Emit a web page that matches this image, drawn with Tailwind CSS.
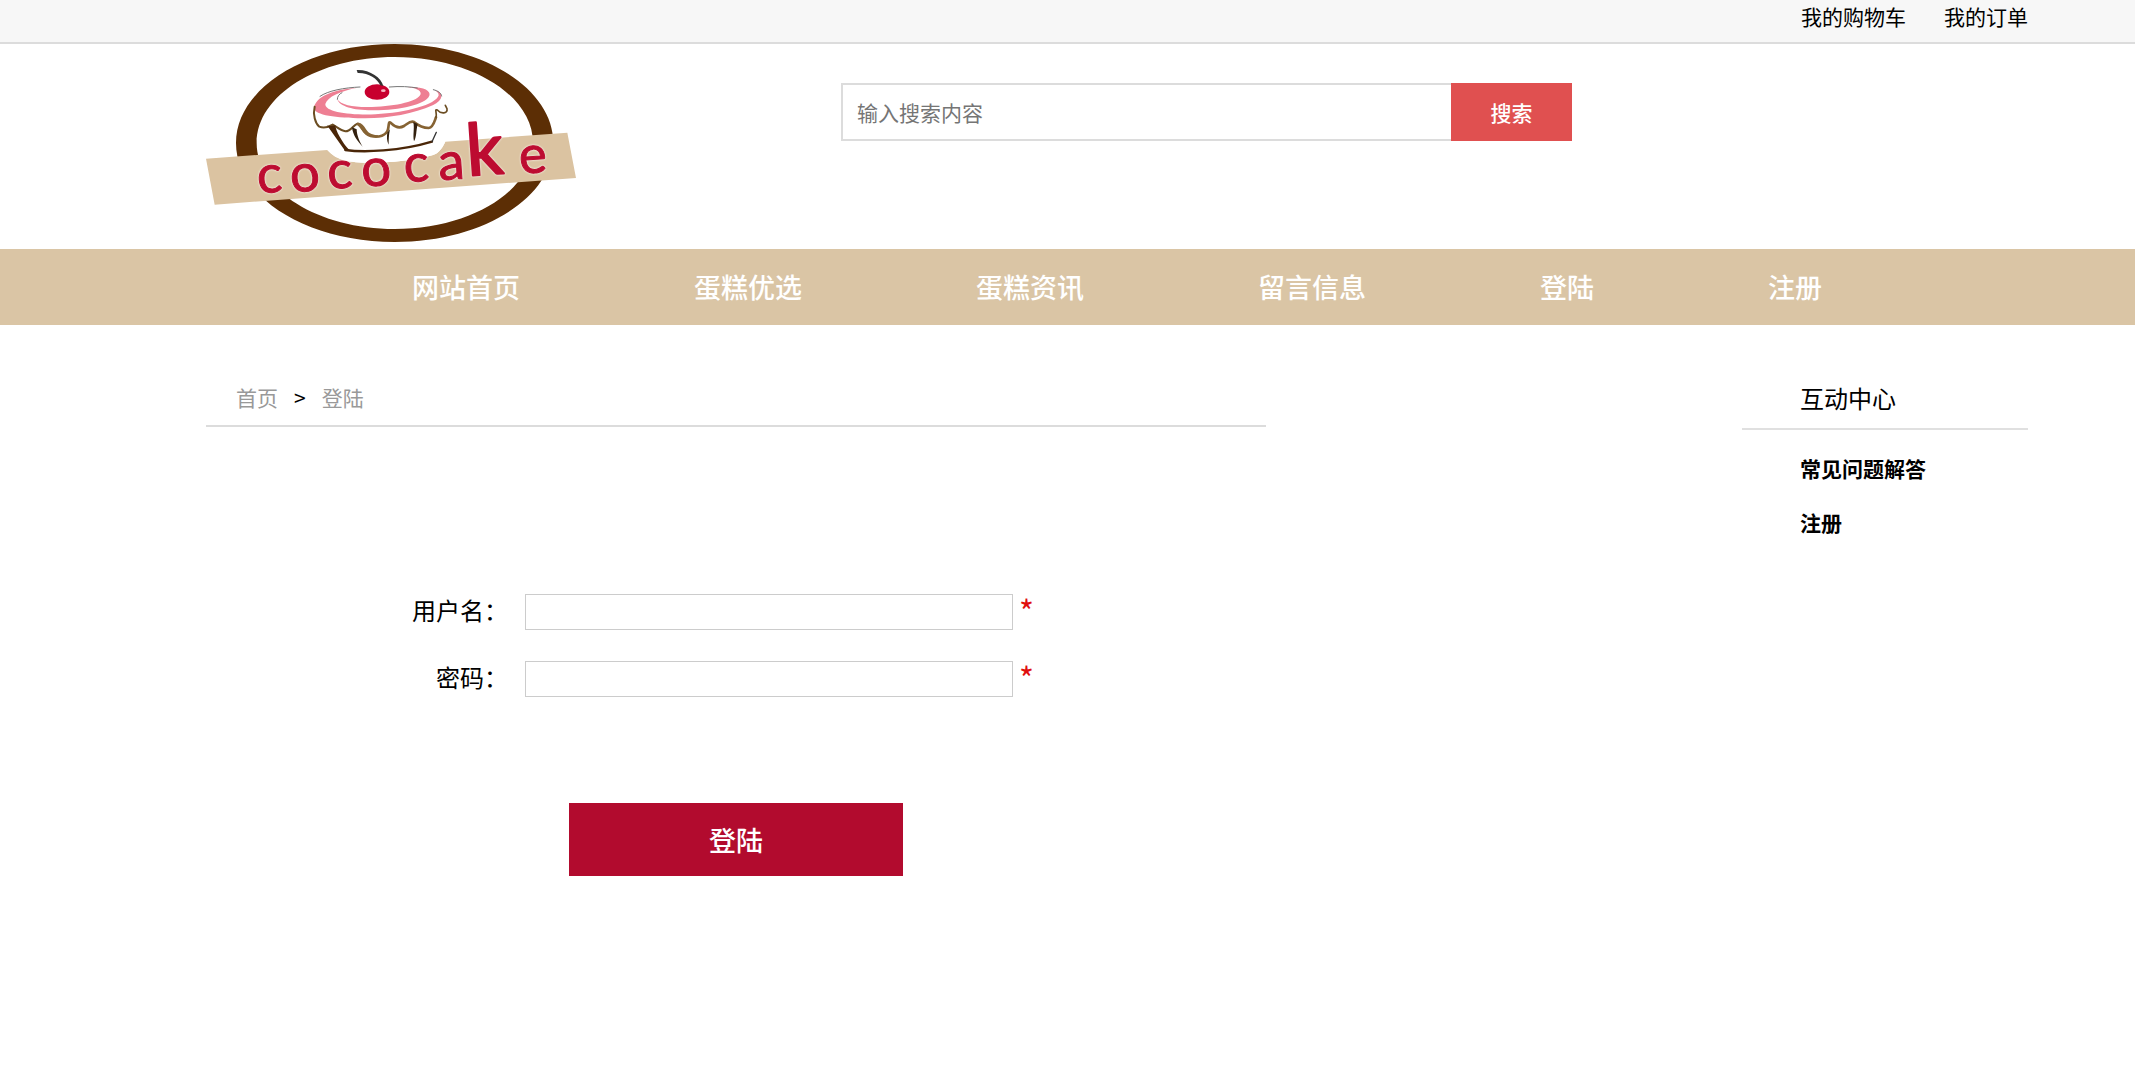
<!DOCTYPE html>
<html lang="zh-CN">
<head>
    <meta charset="UTF-8">
    <meta name="viewport" content="width=device-width, initial-scale=1.0">
    <title>登陆</title>
    <script src="https://cdn.jsdelivr.net/npm/@tailwindcss/browser@4"></script>
</head>
<body class="bg-white text-black text-[21px] leading-8 font-['Noto_Sans_CJK_SC',sans-serif]">
    <div class="h-11 bg-[#f7f7f7] border-b-2 border-[#dcdcdc]">
        <div class="flex justify-end gap-[38px] ml-[206px] mr-[107px]">
            <a href="#">我的购物车</a>
            <a href="#">我的订单</a>
        </div>
    </div>

    <header class="flex items-start h-[205px] ml-[206px] mr-[107px]">
        <a href="#" aria-label="cococake">
            <svg class="w-[370px] h-[198px]" viewBox="48 41 1110 594">
                <ellipse cx="614" cy="338" rx="445" ry="277" fill="#fff" />
                <path fill="#5c2e05" fill-rule="evenodd" d="M614 41C877 41 1090 174 1090 338S877 635 614 635 138 502 138 338 351 41 614 41ZM614 80C385 80 200 195 200 338S385 596 614 596 1029 481 1029 338 843 80 614 80Z" />
                <path fill="#dbc3a1" d="M48 385 412 359C432 380 455 395 520 397 600 400 690 388 735 372 752 362 758 350 766 334L1132 307 1158 443 74 523Z" />
                <path fill="#fff" d="M412 359C432 380 455 395 520 397 600 400 690 388 735 372 752 362 758 350 766 334L740 300 430 310Z" />
                <g transform="translate(330 75)" fill="none" stroke-linecap="round">
                    <path fill="#fff" d="M42 155C70 90 400 60 430 140L400 262C300 295 180 290 135 285Z" />
                    <!-- icing -->
                    <path fill="#ee7f93" d="M42 158C46 126 92 103 172 97 122 107 82 124 76 146 74 170 150 180 226 177 320 172 408 148 416 120 416 112 410 108 403 104 432 110 432 134 398 150 340 176 262 190 188 189 110 188 44 180 42 158Z" />
                    <path fill="#ee7f93" d="M322 95C370 93 394 106 388 121 376 148 300 164 222 165 164 166 118 154 112 132 122 150 166 157 216 155 290 152 356 138 362 116 363 104 346 98 322 95Z" />
                    <path stroke="#777" stroke-width="3" d="M60 123C84 106 132 97 180 95M268 95C300 92 330 94 352 98M112 132C112 122 118 116 126 112M400 103C416 107 424 114 425 122" />
                    <!-- drips -->
                    <path stroke="#6b4d22" stroke-width="6" d="M44 154C38 178 46 204 58 214 72 220 88 214 98 208 112 216 122 226 136 228 154 228 160 208 172 205" />
                    <path stroke="#866333" stroke-width="8" d="M174 206C186 212 190 236 212 242 236 248 260 240 264 222 268 206 264 196 274 204 284 214 298 220 312 212 322 206 332 194 342 200 354 210 366 218 386 218 400 216 404 196 408 186" />
                    <path stroke="#6b4d22" stroke-width="5" d="M408 186C412 174 402 160 412 164 422 176 444 176 441 160L436 150" />
                    <path fill="#866333" d="M168 206C178 196 190 208 198 222 206 236 222 240 236 240 222 250 196 242 188 228 182 216 176 212 168 206Z" />
                    <!-- paper cup -->
                    <path fill="#4a2608" d="M80 208C86 214 96 212 106 210 106 224 126 262 148 284L134 285Z" />
                    <path stroke="#4a2608" stroke-width="7" d="M136 284C190 292 300 288 396 259" />
                    <path stroke="#333" stroke-width="4" d="M396 259 409 231" />
                    <path fill="#33210f" d="M156 216 170 222C170 240 180 262 188 274 172 258 158 238 156 216ZM262 232 270 222C266 240 266 256 266 268 260 256 260 244 262 232ZM340 200 353 206C348 226 350 246 342 258 338 238 344 220 340 200Z" />
                    <!-- cherry -->
                    <ellipse cx="231" cy="110" rx="37" ry="23" fill="#c8002e" />
                    <path fill="#333" d="M170 44C208 42 244 66 250 92L241 90C232 70 206 52 173 53Z" />
                    <ellipse cx="250" cy="106" rx="7" ry="4" fill="#f6b3c0" />
                </g>
                <text class="drop-shadow-[0_0_3px_white]" font-family="Lato, sans-serif" fill="#bd0c31" stroke="#bd0c31" stroke-width="3" stroke-linejoin="round" rotate="-4"
                    font-size="158" x="204 303 415 517 644 748 834 990" y="489 486 476 469 456 450 436 430">cococa<tspan font-size="214" stroke-width="7">k</tspan>e</text>
            </svg>
        </a>
        <form class="flex mt-[39px] ml-[265px]">
            <input type="text" aria-label="搜索" placeholder="输入搜索内容" class="w-[610px] h-[58px] px-[14px] border-2 border-r-0 border-[#dcdcdc] outline-none placeholder:text-[#757575]">
            <button type="submit" class="w-[121px] h-[58px] bg-[#e05050] text-white font-medium cursor-pointer">搜索</button>
        </form>
    </header>

    <nav class="h-[76px] bg-[#dac5a5] flex items-center gap-[174px] pl-[412px] text-[27px] font-medium text-white">
        <a href="#">网站首页</a>
        <a href="#">蛋糕优选</a>
        <a href="#">蛋糕资讯</a>
        <a href="#">留言信息</a>
        <a href="#">登陆</a>
        <a href="#">注册</a>
    </nav>

    <main class="flex justify-between items-start ml-[206px] mr-[107px]">
        <section class="w-[1060px]">
            <div class="flex items-end gap-4 h-[102px] pb-3 pl-[30px] border-b-2 border-[#dcdcdc] text-[#999]">
                <a href="#">首页</a>
                <span class="text-black">&gt;</span>
                <a href="#">登陆</a>
            </div>
            <form class="mt-[167px]">
                <div class="flex h-9 mb-[31px]">
                    <label for="username" class="w-[302px] text-right text-2xl leading-8">用户名：</label>
                    <input id="username" type="text" class="w-[488px] h-9 ml-[17px] px-2 border border-[#ccc] outline-none">
                    <span class="ml-1.5 text-[32px] leading-8 text-[#e00f0f]">*</span>
                </div>
                <div class="flex h-9">
                    <label for="password" class="w-[302px] text-right text-2xl leading-8">密码：</label>
                    <input id="password" type="password" class="w-[488px] h-9 ml-[17px] px-2 border border-[#ccc] outline-none">
                    <span class="ml-1.5 text-[32px] leading-8 text-[#e00f0f]">*</span>
                </div>
                <button type="submit" class="block w-[334px] h-[73px] mt-[106px] ml-[363px] bg-[#b20b2e] text-white text-[27px] font-medium cursor-pointer">登陆</button>
            </form>
        </section>

        <aside class="w-[286px]">
            <h2 class="h-[105px] pt-[57px] pl-[58px] text-2xl leading-8 border-b-2 border-[#e0e0e0]">互动中心</h2>
            <ul class="pt-[22px] pl-[58px] font-bold">
                <li class="mb-[22px]"><a href="#">常见问题解答</a></li>
                <li><a href="#">注册</a></li>
            </ul>
        </aside>
    </main>
</body>
</html>
